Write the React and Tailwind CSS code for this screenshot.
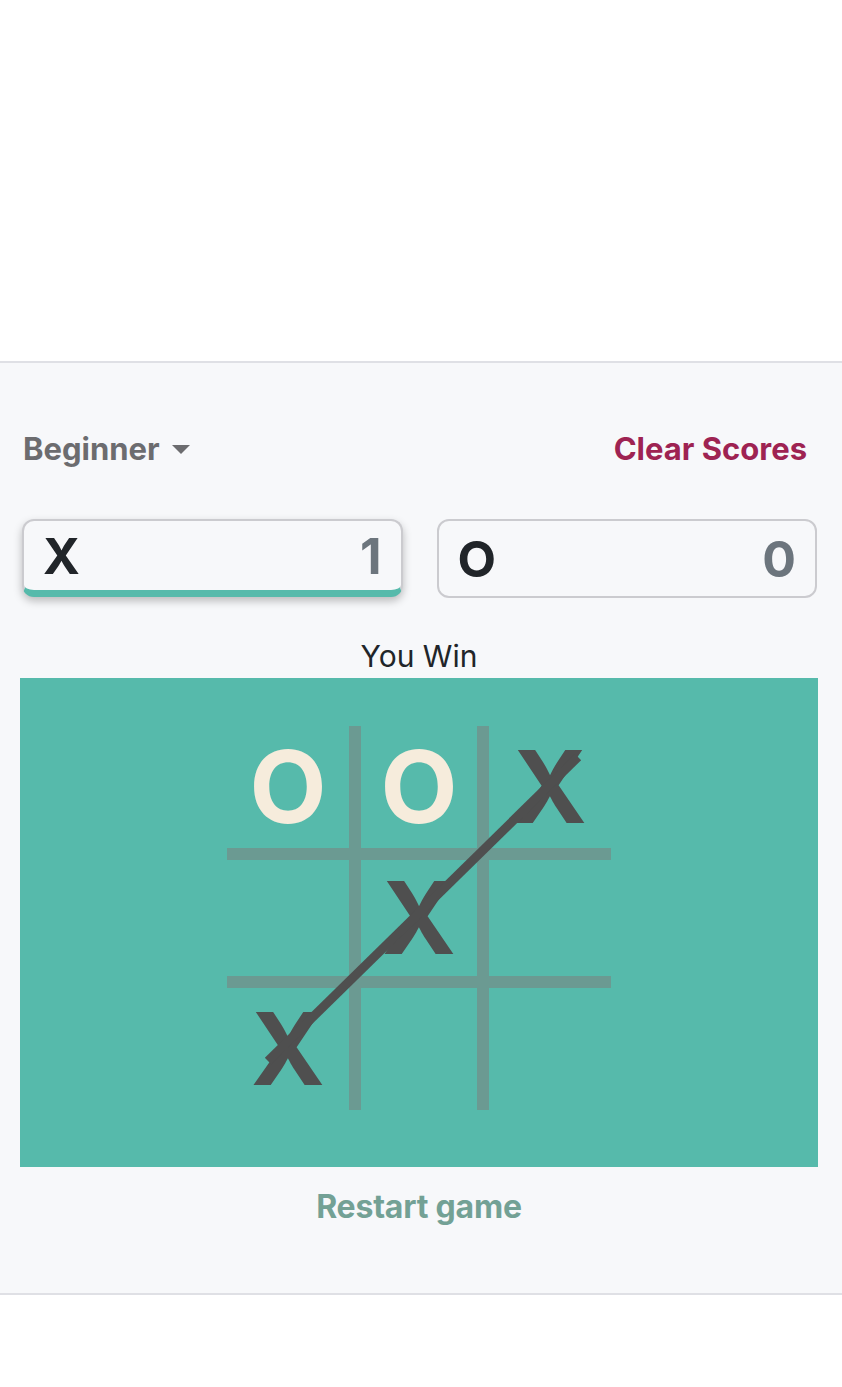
import { useState } from 'react';

const board = ['O', 'O', 'X', '', 'X', '', 'X', '', ''];

// borders on each cell make the 12px grid lines
const cellBorders = [
	'border-r-[6px] border-b-[6px]',
	'border-x-[6px] border-b-[6px]',
	'border-l-[6px] border-b-[6px]',
	'border-r-[6px] border-y-[6px]',
	'border-x-[6px] border-y-[6px]',
	'border-l-[6px] border-y-[6px]',
	'border-r-[6px] border-t-[6px]',
	'border-x-[6px] border-t-[6px]',
	'border-l-[6px] border-t-[6px]',
];

const Caret = () => (
	<svg width="18" height="10" viewBox="0 0 18 10" className="ml-[12px] mt-[2px]">
		<path d="M0 0h18L9 9z" fill="#6c6c6f" />
	</svg>
);

export default function App() {
	const [scores] = useState({ x: 1, o: 0 });

	return (
		<div className="min-h-[1387px] bg-white font-['Inter',sans-serif]">
			<div className="h-[361px]" />
			<div className="border-y-2 border-[#dfe0e5] bg-[#f7f8fa]">
				<div className="pb-[66px] pl-5 pr-6 pt-[66px]">
					<div className="flex items-center justify-between pl-[3px] pr-[11px]">
						<button className="flex items-center text-[31px] font-bold leading-[40px] text-[#6c6c6f]">
							Beginner
							<Caret />
						</button>
						<button className="text-[31px] font-bold leading-[40px] text-[#9e2352]">
							Clear Scores
						</button>
					</div>

					<div className="mt-[50px] grid grid-cols-2 gap-[34px] pl-[2px] pr-[1px]">
						<div className="flex h-[78px] items-center justify-between rounded-[12px] border-2 border-b-[7px] border-[#cbcbcf] border-b-[#56baab] bg-[#f7f8fa] px-[19px] shadow-[0_4px_8px_rgba(0,0,0,0.25)]">
							<span className="text-[50px] font-bold leading-none text-[#212529]">X</span>
							<span className="text-[50px] font-bold leading-none text-[#6c757d]">{scores.x}</span>
						</div>
						<div className="flex h-[79px] items-center justify-between rounded-[12px] border-2 border-[#cbcbcf] bg-[#f7f8fa] px-[19px]">
							<span className="text-[50px] font-bold leading-none text-[#212529]">O</span>
							<span className="text-[50px] font-bold leading-none text-[#6c757d]">{scores.o}</span>
						</div>
					</div>

					<p className="mt-[38px] text-center text-[30px] leading-[40px] text-[#212529]">You Win</p>

					<div className="mt-[2px] flex h-[489px] justify-center bg-[#56baab] pt-[48px]">
						<div className="relative h-[384px] w-[384px]">
							<div className="grid grid-cols-3">
								{board.map((mark, i) => (
									<div
										key={i}
										className={`flex h-[128px] w-[128px] items-center justify-center border-[#6b9a92] ${cellBorders[i]}`}
									>
										{mark && (
											<span
												className={`text-[100px] font-bold leading-none ${
													mark === 'O' ? 'text-[#f6ecdc]' : 'text-[#4f4f4f]'
												}`}
											>
												{mark}
											</span>
										)}
									</div>
								))}
							</div>
							<svg className="absolute left-0 top-0" width="384" height="384" viewBox="0 0 384 384">
								<line x1="41" y1="335" x2="351" y2="31" stroke="#4f4f4f" strokeWidth="9" />
							</svg>
						</div>
					</div>

					<div className="mt-[20px] text-center">
						<button className="text-[32px] font-bold leading-[40px] tracking-[-0.2px] text-[#73a195]">
							Restart game
						</button>
					</div>
				</div>
			</div>
		</div>
	);
}
